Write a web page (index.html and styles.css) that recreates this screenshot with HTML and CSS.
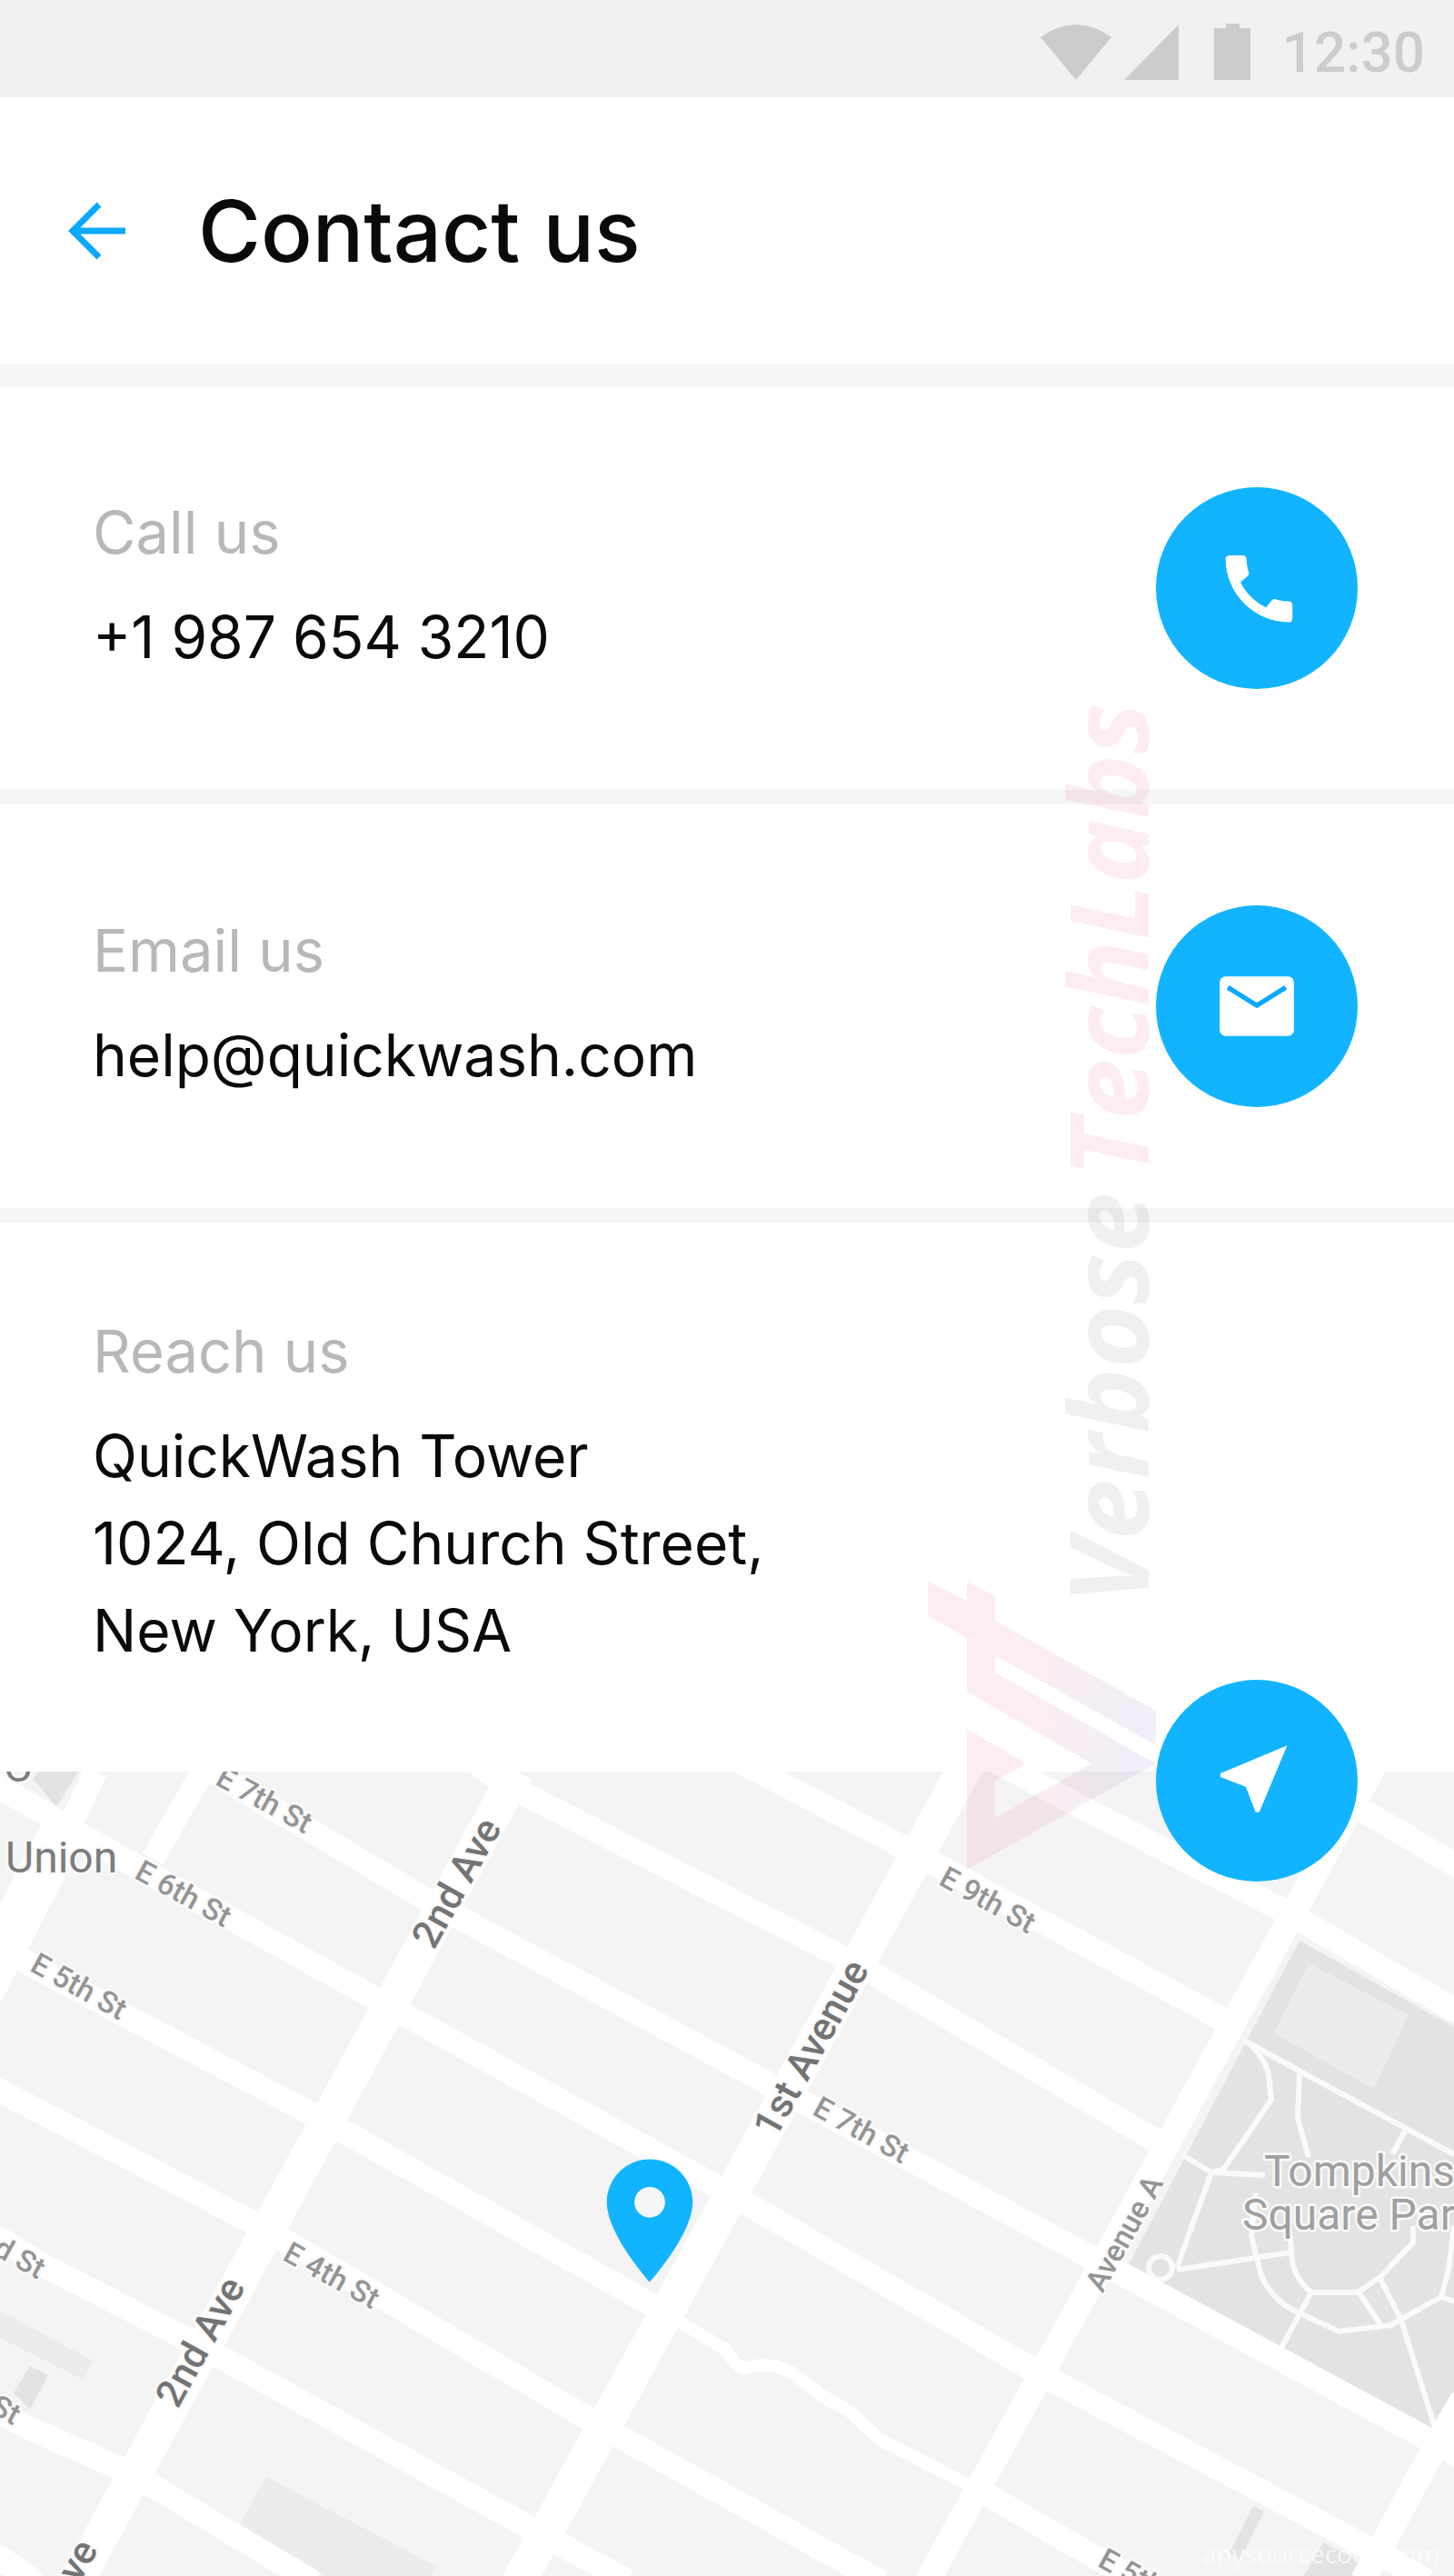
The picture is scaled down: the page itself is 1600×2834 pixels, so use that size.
FILE: index.html
```html
<!DOCTYPE html>
<html lang="en">
<head>
  <meta charset="utf-8">
  <meta name="viewport" content="width=device-width, initial-scale=1">
  <title>Contact us</title>
  <link rel="stylesheet" href="styles.css">
</head>
<body>
  <div class="status-bar">
    <svg class="status-icons" viewBox="0 0 234 64" aria-hidden="true">
      <path d="M0 15Q39-13 78 15L39 62Z"/>
      <path d="M92 62H152V1Z"/>
      <path d="M191 5H204V0H219V5H231V62H191Z"/>
    </svg>
    <time class="clock">12:30</time>
  </div>

  <header class="app-bar">
    <button class="back" type="button" aria-label="Back">
      <svg viewBox="0 0 66 66" aria-hidden="true"><path d="M64 33H6M35 4L6 33L35 62"/></svg>
    </button>
    <h1 class="title">Contact us</h1>
  </header>

  <main class="content">
    <section class="row">
      <div class="details">
        <h2 class="label">Call us</h2>
        <p class="value">+1 987 654 3210</p>
      </div>
      <a class="action" href="tel:+19876543210" aria-label="Call">
        <svg viewBox="-0.6 -0.2 24 24" aria-hidden="true"><path d="M20.01 15.38c-1.23 0-2.42-.2-3.53-.56-.35-.12-.74-.03-1.01.24l-1.57 1.97c-2.83-1.35-5.48-3.9-6.89-6.83l1.95-1.66c.27-.28.35-.67.24-1.02-.37-1.11-.56-2.3-.56-3.53 0-.54-.45-.99-.99-.99H4.19C3.65 3 3 3.24 3 3.99 3 13.28 10.73 21 20.01 21c.71 0 .99-.63.99-1.18v-3.45c0-.54-.45-.99-.99-.99z"/></svg>
      </a>
    </section>

    <section class="row">
      <div class="details">
        <h2 class="label">Email us</h2>
        <p class="value">help@quickwash.com</p>
      </div>
      <a class="action" href="mailto:help@quickwash.com" aria-label="Send email">
        <svg viewBox="0 0 24 24" aria-hidden="true"><rect x="2" y="4" width="20" height="16" rx="1.6"/><path class="flap" d="M4.2 6.9L12 11.8L19.8 6.9"/></svg>
      </a>
    </section>

    <section class="row row-address">
      <div class="details">
        <h2 class="label">Reach us</h2>
        <p class="value">QuickWash Tower<br>1024, Old Church Street,<br>New York, USA</p>
      </div>
      <a class="action action-directions" href="#map" aria-label="Directions">
        <svg viewBox="0.8 0.5 24 24" aria-hidden="true"><path d="M21 3L3 10.53v.98l6.84 2.65L12.48 21h.98L21 3z"/></svg>
      </a>
    </section>

    <svg class="map" id="map" viewBox="0 0 1600 885" role="img" aria-label="Map of the East Village, New York">
      <rect width="1600" height="885" fill="#f4f4f4"/>

      <g class="block-light">
        <path d="M0 593L102 648L92 669L0 623Z"/>
        <path d="M293 776L480 874L474 885H357L263 829Z"/>
      </g>
      <g class="block">
        <path d="M36 8L43 0H86L62 39Z"/>
        <path d="M33 654L53 664L33 702L15 684Z"/>
        <path d="M1379 808L1391 814L1364 868L1353 859Z"/>
        <path d="M1456 848L1501 871L1494 885H1435Z"/>
        <path d="M1430 186L1600 281V698L1581 728L1241 544Z"/>
      </g>
      <path class="block-light" d="M1440 211L1550 268L1512 349L1402 288Z"/>

      <g class="path">
        <path d="M1369 296L1433 331L1600 421"/>
        <path d="M1377 301Q1394 320 1396 334L1399 361L1346 438L1333 441L1295 546"/>
        <path d="M1430 331L1428 381L1440 424"/>
        <path d="M1547 394L1532 421"/>
        <path d="M1300 421L1333 441L1392 444"/>
        <path d="M1295 548L1420 529"/>
        <path d="M1382 464L1377 511L1388 555Q1402 585 1433 597L1473 616L1530 609L1586 578L1600 583"/>
        <path d="M1420 511L1422 540Q1428 562 1443 573H1494L1519 556L1555 518V500"/>
        <path d="M1443 573L1410 634"/>
        <path d="M1496 574L1519 608"/>
        <path d="M1519 558L1542 604L1581 728"/>
        <path d="M1586 578L1594 548L1600 500"/>
        <circle cx="1277" cy="546" r="13"/>
      </g>

      <g class="street">
        <path d="M105 0L76 62"/>
        <path d="M223 0L168 96"/>
        <path d="M-20 6L128 92L428 258L804 465L1147 664L1519 861L1570 890"/>
        <path d="M200-20L306 44L487 151L866 354L1213 541L1578 738L1610 756"/>
        <path d="M525-8L556 14L945 213L1285 414"/>
        <path d="M810-13L1009 91L1356 278"/>
        <path d="M1080-20L1188 38L1422 158L1610 268"/>
        <path d="M1380-20L1514 51L1610 108"/>
        <path d="M20 205L143 271L357 384L730 594"/>
        <path d="M-10 346L293 504L663 721L970 892"/>
        <path d="M-10 508L51 545L219 631L599 841L690 890"/>
        <path d="M-10 700L31 722L143 771L345 892"/>
        <path d="M-10 858L40 892"/>
        <path d="M1078 791L1250 890"/>
      </g>
      <path class="lane" d="M730 594L800 637Q808 652 818 657Q846 648 871 661L902 685L938 706L968 735L1004 753L1078 791"/>
      <g class="avenue">
        <path d="M72 60L-20 240" class="wide"/>
        <path d="M569 0L82 895"/>
        <path d="M1065-10L569 895"/>
      </g>
      <g class="avenue-narrow">
        <path d="M1514-10L1356 278L1213 541L1018 895"/>
        <path d="M1610 690L1578 745L1500 890"/>
      </g>

      <g class="avenue-name">
        <text transform="translate(502 122) rotate(-61)">2nd Ave</text>
        <text transform="translate(220 627) rotate(-61)">2nd Ave</text>
        <text transform="translate(58 916) rotate(-61)">2nd Ave</text>
        <text transform="translate(892 304) rotate(-61)">1st Avenue</text>
      </g>
      <g class="street-name">
        <text transform="translate(291 31) rotate(29)">E 7th St</text>
        <text transform="translate(202 134) rotate(29)">E 6th St</text>
        <text transform="translate(87 236) rotate(29)">E 5th St</text>
        <text transform="translate(365 554) rotate(29)">E 4th St</text>
        <text transform="translate(-3 521) rotate(29)">E 3rd St</text>
        <text transform="translate(-33 680) rotate(29)">E 2nd St</text>
        <text transform="translate(1087 141) rotate(29)">E 9th St</text>
        <text transform="translate(948 394) rotate(29)">E 7th St</text>
        <text transform="translate(1262 891) rotate(29)">E 5th St</text>
        <text transform="translate(1237 508) rotate(-61)">Avenue A</text>
      </g>
      <g class="place-name">
        <text x="4" y="11">C</text>
        <text x="6" y="111">Union</text>
      </g>
      <g class="place-name park-name">
        <text x="1391" y="456">Tompkins</text>
        <text x="1367" y="504">Square Park</text>
      </g>

      <svg x="634" y="413" width="162" height="162" viewBox="0 0 24 24">
        <circle cx="12" cy="9" r="3" fill="#f6f6f6"/>
        <path class="pin" d="M12 2C8.13 2 5 5.13 5 9c0 5.25 7 13 7 13s7-7.75 7-13c0-3.87-3.13-7-7-7zm0 9.5a2.5 2.5 0 1 1 0-5 2.5 2.5 0 0 1 0 5z"/>
      </svg>
      <text class="credit" x="1323" y="871">anysourcecode.com</text>
    </svg>

    <svg class="watermark" viewBox="0 0 260 1300" aria-hidden="true">
      <defs>
        <linearGradient id="brand">
          <stop offset="0.3" stop-color="#f0345a"/>
          <stop offset="0.9" stop-color="#7a3fb0"/>
        </linearGradient>
      </defs>
      <text transform="translate(244 1006) rotate(-90)"><tspan fill="#000" fill-opacity="0.06">Verbose</tspan><tspan dx="16" fill="#f0345a" fill-opacity="0.09">TechLabs</tspan></text>
      <path fill="url(#brand)" fill-opacity="0.09" d="M1 981L44 1002V981L75 997V1024L252 1123V1161L75 1062V1081L252 1181L44 1298V1143L109 1181L75 1200V1241L181 1181L44 1102V1043L1 1018Z"/>
    </svg>
  </main>
</body>
</html>
```
FILE: styles.css
```css
* {
  box-sizing: border-box;
}

body {
  margin: 0;
  background: #fff;
  color: #0a0a0a;
  font-family: Inter, Roboto, sans-serif;
}

h1,
h2,
p {
  margin: 0;
  font-weight: 400;
}

/* Status bar */
.status-bar {
  display: flex;
  align-items: center;
  justify-content: flex-end;
  gap: 32px;
  padding: 20px 32px 12px;
  background: #f1f1f1;
  color: #ccc;
}

.status-icons {
  width: 234px;
  height: 64px;
  fill: currentColor;
}

.clock {
  font: 500 62px/75px Roboto, sans-serif;
}

/* App bar */
.app-bar {
  display: flex;
  align-items: center;
  gap: 76px;
  padding: 91px 72px;
  border-bottom: 24px solid #f5f6f8;
}

.back {
  display: flex;
  padding: 0;
  border: 0;
  background: none;
}

.back svg {
  width: 70px;
  height: 66px;
  fill: none;
  stroke: #0ba9ff;
  stroke-width: 7;
}

.title {
  font-size: 94px;
  font-weight: 500;
  line-height: 112px;
}

/* Contact rows */
.content {
  position: relative;
  overflow: hidden;
}

.row {
  display: flex;
  align-items: center;
  justify-content: space-between;
  padding: 111px 106px 111px 102px;
  border-bottom: 16px solid #f5f6f8;
}

.details {
  display: grid;
  gap: 27px;
}

.label {
  color: #b8b8b8;
  font-size: 65px;
  line-height: 80px;
}

.value {
  font-size: 64px;
  line-height: 96px;
}

/* The round button sets the row height; the text is centred beside it. */
.row .details {
  margin: -20px 0;
}

.action {
  display: grid;
  place-items: center;
  flex: none;
  width: 222px;
  height: 222px;
  border-radius: 50%;
  background: #12b4ff;
}

.action svg {
  width: 98px;
  height: 98px;
  fill: #fff;
}

.action .flap {
  fill: none;
  stroke: #0ba9ff;
  stroke-width: 1.3;
}

.row-address {
  position: relative;
  padding-top: 122px;
  padding-bottom: 127px;
  border-bottom: 0;
}

/* Straddles the edge between the address and the map. */
.action-directions {
  position: absolute;
  right: 106px;
  bottom: -121px;
  z-index: 2;
}

/* Map */
.map {
  display: block;
  width: 100%;
  height: auto;
  font-family: Roboto, sans-serif;
}

.block {
  fill: #e3e3e3;
}

.block-light {
  fill: #ececec;
}

.path {
  fill: none;
  stroke: #fafafa;
  stroke-width: 6;
}

.path circle {
  fill: #e3e3e3;
}

.street,
.lane,
.avenue,
.avenue-narrow {
  fill: none;
  stroke: #fff;
  stroke-width: 26;
  stroke-linejoin: round;
}

.lane {
  stroke-width: 14;
}

.avenue {
  stroke-width: 38;
}

.avenue .wide {
  stroke-width: 50;
}

.avenue-narrow {
  stroke-width: 28;
}

.map text {
  paint-order: stroke;
  stroke: #fafafa;
  stroke-width: 5;
  stroke-linejoin: round;
}

.avenue-name text,
.street-name text {
  text-anchor: middle;
  dominant-baseline: central;
}

.avenue-name {
  fill: #747474;
  font-size: 43px;
  font-weight: 500;
}

.street-name {
  fill: #949494;
  font-size: 33px;
  font-weight: 500;
}

.place-name {
  fill: #7c7c7c;
  font-size: 48px;
}

.park-name {
  fill: #a0a0a0;
}

.pin {
  fill: #12b4ff;
}

.map .credit {
  fill: #fff;
  fill-opacity: 0.7;
  stroke: none;
  font: 28px "Open Sans", sans-serif;
}

/* Brand mark laid over the page */
.watermark {
  position: absolute;
  top: 334px;
  right: 320px;
  width: 260px;
  height: 1300px;
  pointer-events: none;
  font: italic 700 120px "Open Sans", sans-serif;
}
```
